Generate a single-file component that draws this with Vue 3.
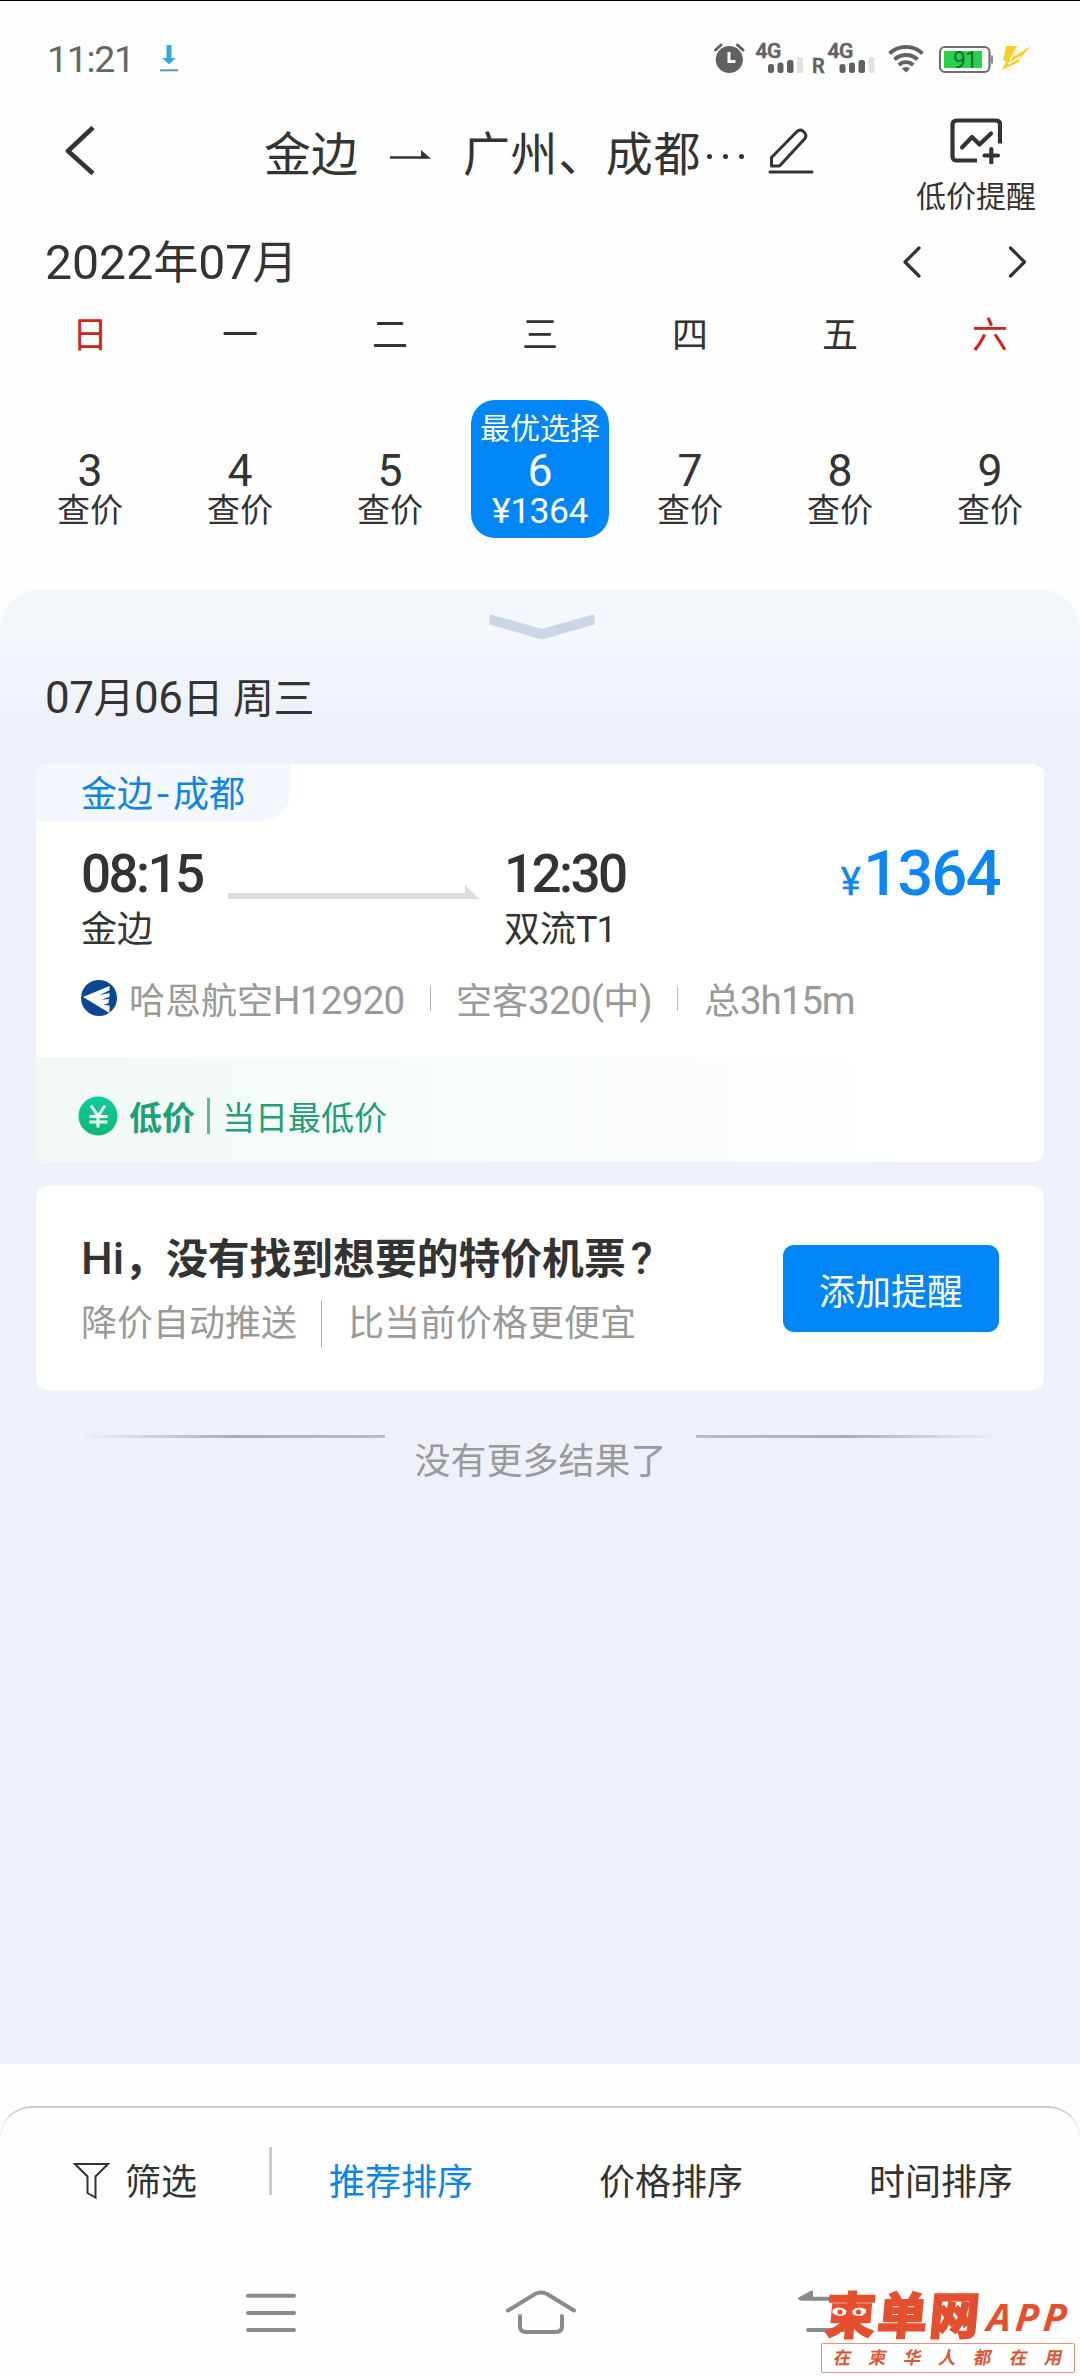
<script setup>
const days = [
  { week: '日', date: '3', price: '查价', weekend: true },
  { week: '一', date: '4', price: '查价' },
  { week: '二', date: '5', price: '查价' },
  { week: '三', date: '6', price: '¥1364', best: true },
  { week: '四', date: '7', price: '查价' },
  { week: '五', date: '8', price: '查价' },
  { week: '六', date: '9', price: '查价', weekend: true },
]
const sorts = [
  { label: '推荐排序', active: true },
  { label: '价格排序' },
  { label: '时间排序' },
]
const slogan = ['在', '柬', '华', '人', '都', '在', '用']
</script>

<template>
  <div class="page">
    <div class="status">
      <span class="clock">11:21</span>
      <svg class="download" width="20" height="28" viewBox="0 0 20 28">
        <path d="M7.5 0h5v13h4.2L10 19.5 3.3 13h4.2z" fill="#35acd6" />
        <path d="M1 25.3h18" stroke="#4e9fb8" stroke-width="2" />
      </svg>
      <svg class="signals" width="330" height="40" viewBox="706 38 330 40">
        <g fill="#616161">
          <circle cx="729.3" cy="59.5" r="13.6" />
          <path d="M715.5 50l5.5-5M743 50l-5.5-5" stroke="#616161" stroke-width="3" stroke-linecap="round" />
          <path d="M729 52v9.500h6.500" stroke="#fff" stroke-width="3" fill="none" />
          <text x="755.500" y="58" class="net">4G</text>
          <rect x="768" y="64" width="6" height="9" rx="2.500" />
          <rect x="777.500" y="62.500" width="6" height="10.500" rx="2.500" />
          <rect x="787" y="60" width="6.500" height="13" rx="2.500" />
          <rect x="797" y="57" width="6" height="16" rx="2" fill="#e2e2e2" />
          <text x="812" y="73" class="roam">R</text>
          <text x="827.500" y="58" class="net">4G</text>
          <rect x="839.500" y="64" width="6" height="9" rx="2.500" />
          <rect x="849" y="62.500" width="6" height="10.500" rx="2.500" />
          <rect x="858.500" y="60" width="6.500" height="13" rx="2.500" />
          <rect x="868.500" y="57" width="6" height="16" rx="2" fill="#e2e2e2" />
          <path d="M906 72.500l-4-4a6 6 0 0 1 8 0z" />
        </g>
        <g fill="none" stroke="#616161" stroke-width="3.800">
          <path d="M889.500 53.500a24 24 0 0 1 33 0" />
          <path d="M894.500 59.500a17 17 0 0 1 23 0" />
          <path d="M898.800 65a10.500 10.500 0 0 1 14.400 0" />
        </g>
        <rect x="940" y="47" width="49.500" height="25" rx="5" fill="#fff" stroke="#6c6e75" stroke-width="2.200" />
        <path d="M992 55.500v8" stroke="#6c6e75" stroke-width="1.600" />
        <rect x="944" y="51" width="38" height="17" fill="#2bd14c" />
        <text x="953" y="68" class="level">91</text>
        <path d="M1006 46h13l-6 11 18-11-13 15h3l-19 9 4-9h-3z" fill="#f5d02a" />
        <path d="M1018 46l-8 14M1020 57l-12 7" stroke="#fff" stroke-width="1.500" />
      </svg>
    </div>

    <header class="head">
      <svg class="back" width="32" height="50" viewBox="0 0 32 50">
        <path d="M29 1.500L4 25l25 22.500" fill="none" stroke="#333" stroke-width="4.600" stroke-linejoin="round" />
      </svg>
      <div class="route">
        <span>金边</span>
        <svg class="to" width="41" height="10" viewBox="0 0 41 10">
          <path d="M0 6.200h31V0l10 8.800H0z" fill="#333" />
        </svg>
        <span class="dest">广州、成都</span>
        <i class="dots"><b></b><b></b><b></b></i>
        <svg class="edit" width="46" height="48" viewBox="0 0 46 48" fill="none" stroke="#333" stroke-width="3" stroke-linecap="round" stroke-linejoin="round">
          <path d="M3.500 38v-8.500L29 3.500q3.500-3 7 .5t.5 7L11.500 38z" />
          <path d="M2 44h42" />
        </svg>
      </div>
      <div class="alert">
        <svg width="52" height="46" viewBox="0 0 52 46" fill="none" stroke="#333" stroke-width="4.200" stroke-linecap="butt" stroke-linejoin="round">
          <path d="M27 42.500H7q-4.500 0-4.500-4.500V6.500q0-4 4.500-4h39q4 0 4 4v19" />
          <path d="M12 29.500l10-10.500 7.500 7.500L41 15.500" stroke-linecap="round" />
          <path d="M34.500 37.500H48M41.300 31v13.500" stroke-linecap="round" />
        </svg>
        <span>低价提醒</span>
      </div>
    </header>

    <div class="month">
      <div class="month-name"><span class="n">2022</span>年<span class="n">07</span>月</div>
      <svg width="125" height="32" viewBox="0 0 125 32" fill="none" stroke="#333" stroke-width="3.200" stroke-linecap="round" stroke-linejoin="round">
        <path d="M17 2L3 16l14 14M108.500 2l14 14-14 14" />
      </svg>
    </div>

    <div class="calendar">
      <div v-for="d in days" :key="d.date" class="col">
        <div class="week" :class="{ weekend: d.weekend }">{{ d.week }}</div>
        <div class="day" :class="{ best: d.best }">
          <div class="tip">{{ d.best ? '最优选择' : '' }}</div>
          <div class="date">{{ d.date }}</div>
          <div class="fare">{{ d.price }}</div>
        </div>
      </div>
    </div>

    <main class="sheet">
      <svg class="handle" width="106" height="26" viewBox="0 0 106 26">
        <path d="M2 0.500L53 15l51-14.500 1.500 1.500v8.500L53 25.500.5 10.500V2z" fill="#cbd5e5" />
      </svg>
      <h2 class="day-title"><span class="n">07</span>月<span class="n">06</span>日 周三</h2>

      <section class="card flight">
        <div class="tag">金边<span class="dash">-</span>成都</div>
        <div class="leg">
          <div class="stop from">
            <div class="time">08:15</div>
            <div class="place">金边</div>
          </div>
          <svg class="line" width="251" height="14" viewBox="0 0 251 14">
            <path d="M0 8h237V0l14 14H0z" fill="#dcdcdc" />
          </svg>
          <div class="stop">
            <div class="time">12:30</div>
            <div class="place">双流<span class="terminal">T1</span></div>
          </div>
          <div class="price"><span class="yen">¥</span>1364</div>
        </div>
        <div class="info">
          <svg width="36" height="36" viewBox="0 0 36 36">
            <circle cx="18" cy="18" r="18" fill="#0b4794" />
            <path d="M2 17L28.500 6v4.200l-10 5 10-2.200v3.800l-8 3 7.500-.8-.5 4-5 2 6 .5v7.500z" fill="#fff" />
          </svg>
          <span class="airline">哈恩航空<span class="n">H12920</span></span>
          <i class="bar"></i>
          <span class="plane">空客<span class="n">320(</span>中<span class="n">)</span></span>
          <i class="bar"></i>
          <span class="total">总<span class="n">3h15m</span></span>
        </div>
        <div class="promo">
          <svg width="40" height="40" viewBox="0 0 40 40">
            <defs>
              <linearGradient id="coin" x1="0" y1="0" x2="0" y2="1">
                <stop offset="0" stop-color="#0fca9e" />
                <stop offset="1" stop-color="#10b873" />
              </linearGradient>
            </defs>
            <circle cx="20" cy="20" r="19.500" fill="url(#coin)" />
            <path d="M13 9.500l7 10.500 7-10.500M20 20v11.500M11.500 20.500h18M11.500 26h18" fill="none" stroke="#e9fff8" stroke-width="3" />
          </svg>
          <b>低价</b>
          <i></i>
          <span>当日最低价</span>
        </div>
      </section>

      <section class="card remind">
        <div class="copy">
          <h3><span class="n">Hi</span>，没有找到想要的特价机票<span class="n ask">?</span></h3>
          <p><span>降价自动推送</span><i></i><span>比当前价格更便宜</span></p>
        </div>
        <button>添加提醒</button>
      </section>

      <div class="end">
        <i class="fade"></i>
        <span>没有更多结果了</span>
        <i class="fade right"></i>
      </div>
    </main>

    <footer class="bottom">
      <div class="sortbar">
        <div class="filter">
          <svg width="37" height="38" viewBox="0 0 37 38" fill="none" stroke="#333" stroke-width="2" stroke-linejoin="miter">
            <path d="M2 2h33L22.500 14.500v21L14.500 31V14.500z" />
          </svg>
          <span>筛选</span>
          <i></i>
        </div>
        <div v-for="s in sorts" :key="s.label" class="sort" :class="{ active: s.active }">{{ s.label }}</div>
      </div>
      <svg class="nav" width="1080" height="86" viewBox="0 2290 1080 86" fill="none" stroke="#8a8a8a" stroke-width="4" stroke-linecap="round" stroke-linejoin="round">
        <path d="M248 2295.700h46M248 2313h46M248 2330h46" />
        <path d="M508 2310.500L535 2294q6-3 12 0l27 16.500M520 2316v10q0 6 6 6h30q6 0 6-6v-10" />
        <path d="M801 2298.700h50M808 2330h44" />
        <path d="M799 2298.500l13-7v7z" fill="#8a8a8a" stroke-width="2" />
      </svg>
      <div class="mark">
        <svg width="256" height="56" viewBox="820 2288 256 56" fill="#e4502f">
          <g transform="translate(0 2334) skewX(-5)">
            <text x="824" y="0" class="brand">柬单网</text>
            <text x="986" y="-3" class="app">APP</text>
          </g>
          <g>
            <path d="M832.500 2309.500q8-4.500 13.500 1v3.500q-7 4.500-13.500-1zM866 2309.500q-8-4.500-13.500 1v3.500q7 4.500 13.500-1z" fill="#fff" />
            <circle cx="840" cy="2312" r="2.600" />
            <circle cx="858.500" cy="2312" r="2.600" />
          </g>
        </svg>
        <div class="slogan"><span v-for="(c, i) in slogan" :key="i">{{ c }}</span></div>
      </div>
    </footer>
  </div>
</template>

<style>
body {
  margin: 0;
  background: #fefefe;
}
</style>

<style scoped>
.page {
  width: 1080px;
  height: 2376px;
  box-sizing: border-box;
  border-top: 1px solid #000;
  display: flex;
  flex-direction: column;
  overflow: hidden;
  background: #fefefe;
  color: #333;
  font-family: Roboto, "Noto Sans CJK SC", sans-serif;
  font-size: 36px;
}
svg {
  display: block;
  flex: none;
}
i, h2, h3, p {
  font-style: normal;
  font-weight: 400;
  margin: 0;
}
.n {
  font-size: 1.07em;
}
.status {
  height: 113px;
  display: flex;
  align-items: flex-start;
}
.clock {
  margin: 36px 0 0 47px;
  width: 112px;
  font-size: 37.5px;
  line-height: 44px;
  letter-spacing: -1.3px;
  color: #666;
}
.download {
  margin-top: 44px;
}
.signals {
  margin: 37px 0 0 527px;
}
.net {
  font: 500 21px Roboto, sans-serif;
  stroke: #616161;
  stroke-width: 0.6px;
  letter-spacing: -0.5px;
}
.roam {
  font: 500 20px Roboto, sans-serif;
  stroke: #616161;
  stroke-width: 0.6px;
}
.level {
  font: 400 23px Roboto, sans-serif;
  letter-spacing: -1px;
  fill: #1c6a30;
}
.head {
  height: 112px;
  display: flex;
  align-items: flex-start;
}
.back {
  margin: 12px 0 0 64px;
}
.route {
  display: flex;
  align-items: flex-start;
  margin-left: 168px;
  width: 650px;
  font-size: 47px;
  line-height: 60px;
  padding-top: 11px;
}
.to {
  margin: 25px 32px 0 32px;
}
.dest {
  letter-spacing: 0.6px;
}
.dots {
  display: flex;
  width: 47px;
  margin: 29px 0 0 1px;
  justify-content: space-around;
}
.dots b {
  width: 5px;
  height: 5px;
  border-radius: 50%;
  background: #333;
}
.edit {
  margin: 3px 0 0 19px;
}
.alert {
  display: flex;
  flex-direction: column;
  align-items: center;
  width: 124px;
  padding-top: 4px;
  font-size: 30px;
  line-height: 40px;
}
.alert span {
  margin-top: 13px;
}
.month {
  display: flex;
  justify-content: space-between;
  align-items: center;
  height: 74px;
  padding: 0 53px 0 45px;
}
.month-name {
  font-size: 45px;
  line-height: 75px;
}
.month svg {
  margin-top: -2px;
}
.calendar {
  display: flex;
  padding: 0 15px;
  height: 289px;
}
.col {
  width: 150px;
  display: flex;
  flex-direction: column;
  align-items: center;
}
.week {
  height: 100px;
  line-height: 72px;
}
.weekend {
  color: #cb241c;
}
.day {
  width: 138px;
  height: 138px;
  border-radius: 24px;
  display: flex;
  flex-direction: column;
  align-items: center;
}
.best {
  background: #0086f6;
  color: #fff;
}
.tip {
  height: 46px;
  padding-top: 6px;
  line-height: 46px;
  font-size: 30px;
  white-space: nowrap;
}
.date {
  height: 39px;
  line-height: 39px;
  font-size: 44.5px;
}
.fare {
  line-height: 40px;
  font-size: 33px;
}
.best .fare {
  font-size: 35.5px;
  letter-spacing: -0.5px;
}
.sheet {
  height: 1475px;
  display: flex;
  flex-direction: column;
  align-items: center;
  border-radius: 40px 40px 0 0;
  background: linear-gradient(#f4f6fa 0, #f4f8fd 50px, #eef1f9 130px);
}
.handle {
  margin: 25px 0 0 3px;
}
.day-title {
  align-self: flex-start;
  margin: 26px 0 0 45px;
  font-size: 41px;
  line-height: 65px;
  letter-spacing: -0.4px;
}
.card {
  width: 1008px;
  border-radius: 12px;
  background: #fff;
  overflow: hidden;
}
.flight {
  height: 398px;
  margin-top: 32px;
  display: flex;
  flex-direction: column;
}
.tag {
  width: 209px;
  height: 57px;
  padding-left: 45px;
  line-height: 63px;
  border-bottom-right-radius: 28px;
  background: #f3f7fe;
  color: #0d84e6;
}
.dash {
  display: inline-block;
  width: 20px;
  text-align: center;
  transform: scaleX(1.25);
}
.leg {
  display: flex;
  height: 146px;
  padding: 0 45px;
}
.stop {
  margin-top: 20px;
}
.from {
  width: 147px;
}
.time {
  font-size: 53px;
  line-height: 66px;
  font-weight: 500;
  letter-spacing: -2.6px;
}
.place {
  line-height: 46px;
}
.terminal {
  letter-spacing: -1px;
}
.line {
  margin: 64px 25px 0 0;
}
.price {
  margin: 13px -1px 0 auto;
  font-size: 63px;
  line-height: 80px;
  font-weight: 500;
  letter-spacing: -1.6px;
  color: #0b86f3;
}
.yen {
  font-size: 38px;
  font-weight: 400;
  margin-right: 4px;
  -webkit-text-stroke: 0.4px #0b86f3;
}
.info {
  display: flex;
  align-items: center;
  height: 90px;
  box-sizing: border-box;
  padding: 0 0 28px 45px;
  color: #999;
}
.info .n {
  letter-spacing: -0.7px;
}
.airline {
  width: 301px;
  padding-left: 12px;
  box-sizing: border-box;
}
.info .bar {
  width: 1px;
  height: 25px;
  margin-left: 12px;
  background: #bbb;
}
.plane {
  padding-left: 25px;
  width: 209px;
}
.total {
  padding-left: 26px;
}
.total .n {
  letter-spacing: -1.1px;
}
.promo {
  flex: 1;
  display: flex;
  align-items: center;
  padding: 12px 0 0 42px;
  font-size: 33px;
  color: #1f9f73;
  background: linear-gradient(90deg, #f1f9f7, #fff 90%);
}
.promo b {
  margin-left: 11px;
  font-weight: 700;
}
.promo i {
  width: 3px;
  height: 36px;
  margin: 0 12px 0 12px;
  background: #5dbb9b;
}
.remind {
  height: 204px;
  margin-top: 24px;
  display: flex;
  justify-content: space-between;
  box-sizing: border-box;
  padding: 0 45px;
}
.copy {
  padding-top: 41px;
}
h3 {
  font-size: 41.8px;
  line-height: 64px;
  font-weight: 700;
}
h3 .n {
  font-weight: 500;
}
h3 .ask {
  margin-left: 5px;
}
.copy p {
  display: flex;
  align-items: center;
  line-height: 62px;
  color: #999;
  margin-top: 1px;
}
.copy p i {
  width: 1px;
  height: 48px;
  margin: 0 26px 0 24px;
  background: #bbb;
}
button {
  margin-top: 59px;
  width: 216px;
  height: 87px;
  padding: 0;
  border: 0;
  border-radius: 11px;
  background: #0086f6;
  color: #fff;
  font: inherit;
}
.end {
  display: flex;
  width: 920px;
  justify-content: space-between;
  margin: 45px 0 0 1px;
  color: #999;
}
.end span {
  line-height: 54px;
}
.fade {
  width: 304px;
  height: 3px;
  background: linear-gradient(90deg, transparent, #a9adb6 50%, #b9bdc8);
}
.fade.right {
  transform: scaleX(-1);
}
.bottom {
  flex: 1;
  position: relative;
}
.sortbar {
  margin-top: 42px;
  height: 184px;
  box-sizing: border-box;
  border-top: 2px solid #ccc;
  border-radius: 32px 32px 0 0;
  display: flex;
  align-items: flex-start;
  line-height: 60px;
}
.filter {
  flex: none;
  width: 266px;
  display: flex;
  align-items: flex-start;
  padding-top: 39px;
  white-space: nowrap;
}
.filter svg {
  margin: 15px 0 0 73px;
}
.filter span {
  flex: none;
  margin: 6px 0 0 15px;
}
.filter i {
  flex: none;
  width: 3px;
  height: 48px;
  margin-left: 72px;
  background: #ccc;
}
.sort {
  width: 270px;
  text-align: center;
  padding-top: 45px;
}
.active {
  color: #0d84e6;
}
.mark {
  position: absolute;
  left: 820px;
  top: 224px;
  width: 256px;
}
.mark svg {
  overflow: visible;
}
.brand {
  font: 900 50px "Noto Sans CJK SC", sans-serif;
  letter-spacing: 2px;
  stroke: #e4502f;
  stroke-width: 1.5px;
}
.app {
  font: italic 700 38px "Noto Sans", sans-serif;
  letter-spacing: 4.5px;
}
.slogan {
  margin: -1px 0 0 1px;
  width: 254px;
  height: 30px;
  box-sizing: border-box;
  border: 1px solid #e8917a;
  border-radius: 2px;
  padding: 0 3px;
  display: flex;
  justify-content: space-around;
  font-size: 17.5px;
  font-weight: 700;
  line-height: 29px;
  color: #dd5535;
}
.slogan span {
  transform: skewX(-12deg);
}
</style>
